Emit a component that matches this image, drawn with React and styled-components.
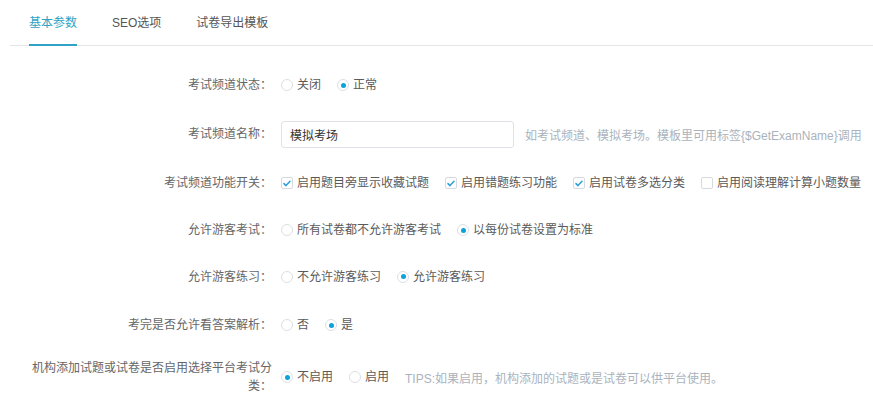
import React from "react";
import styled, { createGlobalStyle } from "styled-components";

const Global = createGlobalStyle`
  html, body { margin: 0; padding: 0; background: #fff; }
  body { font-family: "Liberation Sans", "Noto Sans CJK SC", sans-serif; font-size: 12px; color: #666; }
  * { box-sizing: border-box; }
`;

const Page = styled.div`
  width: 873px;
  height: 410px;
  overflow: hidden;
  background: #fff;
`;

const TabBar = styled.div`
  margin-left: 10px;
  height: 46px;
  border-bottom: 1px solid #e4e4e4;
  display: flex;
  align-items: flex-end;
  gap: 35px;
  padding-left: 19px;
`;

const Tab = styled.div`
  height: 45px;
  line-height: 44px;
  font-size: 12px;
  color: ${(p) => (p.$active ? "#2fa3c4" : "#555")};
  border-bottom: 2px solid ${(p) => (p.$active ? "#2fa3c4" : "transparent")};
  margin-bottom: -1px;
`;

const Form = styled.div`
  padding-top: 15px;
  padding-left: 31px;
`;

const Row = styled.div`
  display: flex;
  align-items: center;
  height: ${(p) => p.$h}px;
`;

const Label = styled.div`
  width: 241px;
  flex: none;
  text-align: right;
  line-height: 18px;
  color: #666;
`;

const Controls = styled.div`
  margin-left: 9px;
  display: flex;
  align-items: center;
  gap: 16px;
`;

const Option = styled.label`
  display: flex;
  align-items: center;
  gap: 4px;
  color: #5a5a5a;
  white-space: nowrap;
  line-height: 18px;
`;

const RadioDot = styled.span`
  width: 12px;
  height: 12px;
  border-radius: 50%;
  border: 1px solid #dcdfe3;
  background: #fff;
  display: inline-flex;
  align-items: center;
  justify-content: center;
  &::after {
    content: "";
    width: 5px;
    height: 5px;
    border-radius: 50%;
    background: ${(p) => (p.$checked ? "#0aa3dc" : "transparent")};
  }
`;

const Box = styled.span`
  width: 12px;
  height: 12px;
  border-radius: 2px;
  border: 1px solid #d6dadf;
  background: #fff;
  display: inline-flex;
  align-items: center;
  justify-content: center;
`;

const TextInput = styled.input`
  width: 233px;
  height: 27px;
  border: 1px solid #dfe2e6;
  border-radius: 3px;
  padding: 0 8px;
  font-family: "Liberation Sans", "Noto Sans CJK SC", sans-serif;
  font-size: 12px;
  color: #333;
  outline: none;
`;

const Hint = styled.span`
  color: #aab3bd;
  white-space: nowrap;
  margin-left: ${(p) => p.$ml || 0}px;
`;

const Radio = ({ checked, children }) => (
  <Option>
    <RadioDot $checked={checked} />
    {children}
  </Option>
);

const Check = ({ checked, children }) => (
  <Option>
    <Box>
      {checked && (
        <svg width="8" height="7" viewBox="0 0 8 7">
          <path d="M1 3.6 L3 5.6 L7 1.2" fill="none" stroke="#2a9fd8" strokeWidth="1.5" strokeLinecap="round" strokeLinejoin="round" />
        </svg>
      )}
    </Box>
    {children}
  </Option>
);

export default function App() {
  return (
    <Page>
      <Global />
      <TabBar>
        <Tab $active>基本参数</Tab>
        <Tab>SEO选项</Tab>
        <Tab>试卷导出模板</Tab>
      </TabBar>
      <Form>
        <Row $h={48}>
          <Label>考试频道状态：</Label>
          <Controls>
            <Radio>关闭</Radio>
            <Radio checked>正常</Radio>
          </Controls>
        </Row>
        <Row $h={50}>
          <Label>考试频道名称：</Label>
          <Controls style={{ gap: 0 }}>
            <TextInput defaultValue="模拟考场" />
            <Hint $ml={11}>如考试频道、模拟考场。模板里可用标签{"{$GetExamName}"}调用</Hint>
          </Controls>
        </Row>
        <Row $h={48}>
          <Label>考试频道功能开关：</Label>
          <Controls>
            <Check checked>启用题目旁显示收藏试题</Check>
            <Check checked>启用错题练习功能</Check>
            <Check checked>启用试卷多选分类</Check>
            <Check>启用阅读理解计算小题数量</Check>
          </Controls>
        </Row>
        <Row $h={46}>
          <Label>允许游客考试：</Label>
          <Controls>
            <Radio>所有试卷都不允许游客考试</Radio>
            <Radio checked>以每份试卷设置为标准</Radio>
          </Controls>
        </Row>
        <Row $h={47}>
          <Label>允许游客练习：</Label>
          <Controls>
            <Radio>不允许游客练习</Radio>
            <Radio checked>允许游客练习</Radio>
          </Controls>
        </Row>
        <Row $h={50}>
          <Label>考完是否允许看答案解析：</Label>
          <Controls>
            <Radio>否</Radio>
            <Radio checked>是</Radio>
          </Controls>
        </Row>
        <Row $h={54}>
          <Label>机构添加试题或试卷是否启用选择平台考试分类：</Label>
          <Controls>
            <Radio checked>不启用</Radio>
            <Radio>启用</Radio>
            <Hint>TIPS:如果启用，机构添加的试题或是试卷可以供平台使用。</Hint>
          </Controls>
        </Row>
      </Form>
    </Page>
  );
}
